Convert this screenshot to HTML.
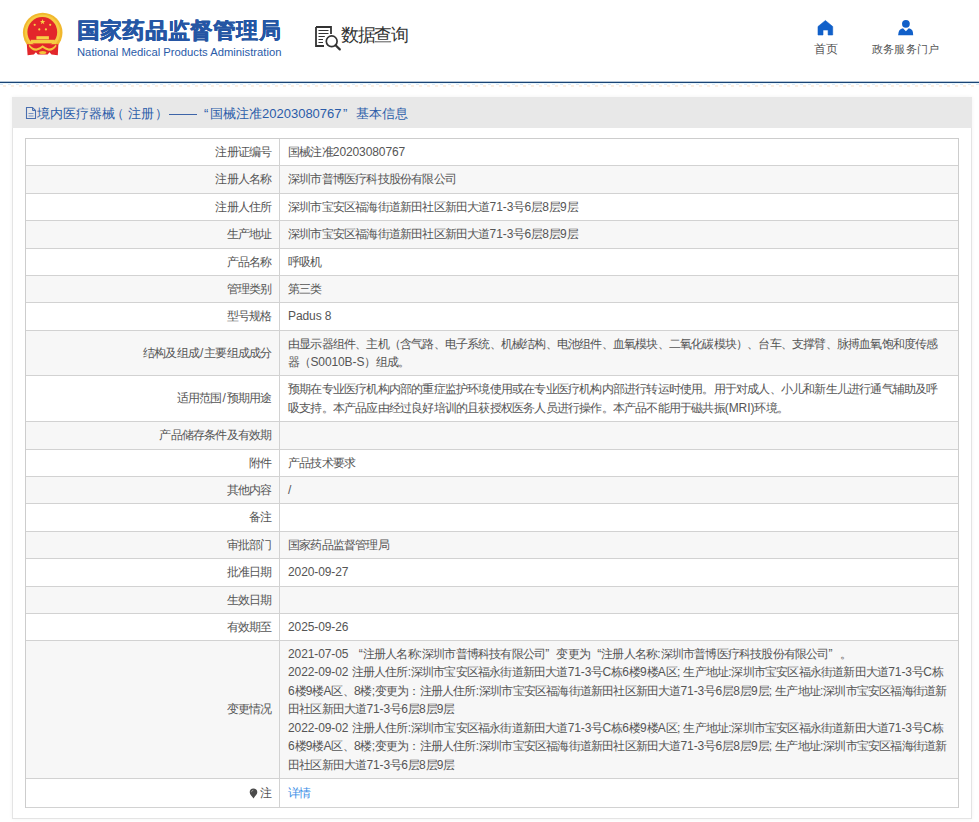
<!DOCTYPE html>
<html><head><meta charset="utf-8">
<style>
*{box-sizing:border-box;margin:0;padding:0}
html,body{width:979px;height:822px;overflow:hidden;background:#fff;font-family:"Liberation Sans",sans-serif;color:#555}
.a{position:absolute;white-space:nowrap}
#bline{position:absolute;left:0;top:82px;width:979px;height:1px;background:#1a4475;box-shadow:0 -0.5px 0 #6d8db0}
#stripe{position:absolute;left:0;top:83px;width:979px;height:1px;background:#e9f6fc}
#stripe2{position:absolute;left:0;top:84px;width:979px;height:1px;background:repeating-linear-gradient(90deg,#dde9f5 0 3px,#fff 3px 8px)}
#stripe3{position:absolute;left:0;top:85px;width:979px;height:2px;background:repeating-linear-gradient(90deg,#fff 0 3px,#fbeee2 3px 6px,#fff 6px 8px)}
#t1{left:77px;top:16px;font-size:22px;font-weight:bold;letter-spacing:0.7px;color:#2556a4;line-height:30px;text-shadow:0.5px 0 0 #2556a4,0 0.3px 0 #2556a4}
#t2{left:77px;top:45px;font-size:11.25px;color:#2a5ba8;line-height:14px}
#t3{left:341px;top:22px;font-size:18px;letter-spacing:-1.3px;color:#333;line-height:26px}
.nav{font-size:11px;color:#555;line-height:14px;letter-spacing:0.2px}
#panel{position:absolute;left:12px;top:97px;width:960px;height:722px;border-left:1px solid #e4e4e4;border-right:1px solid #e4e4e4;border-bottom:1px solid #e4e4e4;background:#fff;box-shadow:0 0 4px rgba(0,0,0,0.05)}
#ph{position:absolute;left:12px;top:97px;width:960px;height:31px;background:#e8e8e8}
.pt{font-size:13px;color:#2b5ca8;line-height:18px;top:105px}
#tbl{position:absolute;left:25px;top:138px;width:934px;border:1px solid #cdcdcd;border-bottom:none}
.r{position:relative;border-bottom:1px solid #d2d2d2;font-size:12px;letter-spacing:-0.8px;line-height:18.48px;color:#555;display:flex}
i{font-style:normal;letter-spacing:-0.1px}
.ql,.qr{font-weight:normal;display:inline-block;width:11.2px;letter-spacing:0}
.ql{text-align:right}.qr{text-align:left}
.lk{color:#3a8ee6}
.r:nth-child(even){background:#f7f7f7}
.l{width:254px;border-right:1px solid #d2d2d2;display:flex;align-items:center;justify-content:flex-end;padding-right:7.5px;white-space:nowrap}
.v{flex:1;display:flex;align-items:center;padding-left:8px;white-space:nowrap}
</style></head><body>
<svg class="a" style="left:0;top:0" width="80" height="70" viewBox="0 0 80 70">
  <circle cx="42.7" cy="32.6" r="19.8" fill="#f1b82e"/>
  <circle cx="42.5" cy="32.3" r="17.6" fill="#f6cc44"/>
  <circle cx="42.3" cy="32" r="14.9" fill="#e3262b"/>
  <path d="M26.8 44.3 L58.4 44.3 L57.8 55.3 L51.5 54.4 L49.5 52.2 L47.6 54.6 L37.8 54.6 L35.9 52.2 L33.9 54.4 L27.6 55.3Z" fill="#e2262b"/>
  <path d="M29.5 44.5 Q32.5 48.6 36.5 48.4 Q40 47.5 42.6 45.3 Q45.2 47.5 48.7 48.4 Q52.7 48.6 55.8 44.5 L56.6 46 Q53.5 51 48.7 50.7 Q45 50 42.6 47.8 Q40.2 50 36.5 50.7 Q31.7 51 28.7 46Z" fill="#f4c53c"/>
  <path d="M42.6 19 L43.3 21 L45.3 21 L43.7 22.2 L44.3 24.2 L42.6 23 L40.9 24.2 L41.5 22.2 L39.9 21 L41.9 21Z" fill="#f7d046"/>
  <circle cx="34.7" cy="24.8" r="1.1" fill="#f7d046"/>
  <circle cx="50.2" cy="24.8" r="1.1" fill="#f7d046"/>
  <circle cx="39.3" cy="29.4" r="1.1" fill="#f7d046"/>
  <circle cx="45.9" cy="29.4" r="1.1" fill="#f7d046"/>
  <rect x="36.4" y="36.2" width="12.5" height="3.2" fill="#f7d046"/>
  <rect x="30.8" y="39.8" width="24" height="3.6" fill="#f5cd42"/>
  <ellipse cx="42.7" cy="52.6" rx="3.6" ry="1.6" fill="#f3c33a"/>
</svg>
<div id="t1" class="a">国家药品监督管理局</div>
<div id="t2" class="a">National Medical Products Administration</div>
<svg class="a" style="left:314px;top:25px" width="28" height="26" viewBox="0 0 28 26">
  <path d="M2 2 H17 V9" fill="none" stroke="#333" stroke-width="1.8"/>
  <path d="M2 2 V21 H10" fill="none" stroke="#333" stroke-width="1.8"/>
  <path d="M4.5 5.5 H14.5 M4.5 8.5 H14.5 M4.5 11.5 H10.8 M4.5 14.5 H9 M4.5 17.5 H9" stroke="#333" stroke-width="1.2"/>
  <circle cx="17.7" cy="16.3" r="5.4" fill="none" stroke="#333" stroke-width="1.7"/>
  <path d="M21.6 20.2 L25.8 24.4" stroke="#333" stroke-width="2.2" stroke-linecap="round"/>
</svg>
<div id="t3" class="a">数据查询</div>
<svg class="a" style="left:816px;top:19px" width="19" height="18" viewBox="0 0 19 18">
  <path d="M2 7.5 L9.4 1.5 L16.7 7.5 L16.7 16 L12.1 16 L12.1 11 L7 11 L7 16 L2 16Z" fill="#1160c9" stroke="#1160c9" stroke-width="0.6" stroke-linejoin="round"/>
</svg>
<div class="a nav" style="left:814px;top:42px;font-size:12px;letter-spacing:-0.5px">首页</div>
<svg class="a" style="left:896px;top:18px" width="20" height="19" viewBox="0 0 20 19">
  <circle cx="9.9" cy="5.8" r="3.9" fill="#1160c9"/>
  <path d="M2.1 17.3 Q2.3 11 7 10.3 L9.9 13.2 L12.8 10.3 Q17.5 11 17.2 17.3Z" fill="#1160c9"/>
</svg>
<div class="a nav" style="left:872px;top:42px">政务服务门户</div>
<div id="bline"></div>
<div id="stripe"></div><div id="stripe2"></div><div id="stripe3"></div>
<div id="panel"></div>
<div id="ph"></div>
<svg class="a" style="left:25px;top:106px" width="12" height="14" viewBox="0 0 12 14">
  <path d="M1.5 1.5 H7.5 L10.5 4.5 V12.5 H1.5Z" fill="none" stroke="#4a6fb0" stroke-width="1.1"/>
  <path d="M7.5 1.5 V4.5 H10.5" fill="none" stroke="#4a6fb0" stroke-width="1"/>
  <path d="M3.5 7.5 H8.5 M3.5 10 H8.5" stroke="#6a88c0" stroke-width="0.9"/>
</svg>
<div class="a pt" style="left:36.5px">境内医疗器械</div>
<div class="a pt" style="left:110.5px">（</div>
<div class="a pt" style="left:128px">注册</div>
<div class="a pt" style="left:154.5px">）</div>
<div class="a" style="left:169px;top:114px;width:28px;height:1px;background:#3d64a8"></div>
<div class="a pt" style="left:204px">“</div>
<div class="a pt" style="left:210px">国械注准20203080767</div>
<div class="a pt" style="left:343px">”</div>
<div class="a pt" style="left:356px">基本信息</div>
<div id="tbl">
  <div class="r" style="height:27px"><div class="l">注册证编号</div><div class="v"><div><span class="ln">国械注准<i>20203080767</i></span></div></div></div>
  <div class="r" style="height:28px"><div class="l">注册人名称</div><div class="v"><div><span class="ln">深圳市普博医疗科技股份有限公司</span></div></div></div>
  <div class="r" style="height:27px"><div class="l">注册人住所</div><div class="v"><div><span class="ln">深圳市宝安区福海街道新田社区新田大道<i>71-3</i>号<i>6</i>层<i>8</i>层<i>9</i>层</span></div></div></div>
  <div class="r" style="height:28px"><div class="l">生产地址</div><div class="v"><div><span class="ln">深圳市宝安区福海街道新田社区新田大道<i>71-3</i>号<i>6</i>层<i>8</i>层<i>9</i>层</span></div></div></div>
  <div class="r" style="height:27px"><div class="l">产品名称</div><div class="v"><div><span class="ln">呼吸机</span></div></div></div>
  <div class="r" style="height:27px"><div class="l">管理类别</div><div class="v"><div><span class="ln">第三类</span></div></div></div>
  <div class="r" style="height:28px"><div class="l">型号规格</div><div class="v"><div><span class="ln"><i>Padus 8</i></span></div></div></div>
  <div class="r" style="height:45px"><div class="l">结构及组成<i style="padding:0 1px">/</i>主要组成成分</div><div class="v"><div><span class="ln">由显示器组件、主机（含气路、电子系统、机械结构、电池组件、血氧模块、二氧化碳模块）、台车、支撑臂、脉搏血氧饱和度传感</span><br><span class="ln">器（<i>S0010B-S</i>）组成。</span></div></div></div>
  <div class="r" style="height:46px"><div class="l">适用范围<i style="padding:0 1px">/</i>预期用途</div><div class="v"><div><span class="ln">预期在专业医疗机构内部的重症监护环境使用或在专业医疗机构内部进行转运时使用。用于对成人、小儿和新生儿进行通气辅助及呼</span><br><span class="ln">吸支持。本产品应由经过良好培训的且获授权医务人员进行操作。本产品不能用于磁共振<i>(MRI)</i>环境。</span></div></div></div>
  <div class="r" style="height:28px"><div class="l">产品储存条件及有效期</div><div class="v"><div></div></div></div>
  <div class="r" style="height:27px"><div class="l">附件</div><div class="v"><div><span class="ln">产品技术要求</span></div></div></div>
  <div class="r" style="height:27px"><div class="l">其他内容</div><div class="v"><div><span class="ln"><i>/</i></span></div></div></div>
  <div class="r" style="height:28px"><div class="l">备注</div><div class="v"><div></div></div></div>
  <div class="r" style="height:27px"><div class="l">审批部门</div><div class="v"><div><span class="ln">国家药品监督管理局</span></div></div></div>
  <div class="r" style="height:28px"><div class="l">批准日期</div><div class="v"><div><span class="ln"><i>2020-09-27</i></span></div></div></div>
  <div class="r" style="height:27px"><div class="l">生效日期</div><div class="v"><div></div></div></div>
  <div class="r" style="height:27px"><div class="l">有效期至</div><div class="v"><div><span class="ln"><i>2025-09-26</i></span></div></div></div>
  <div class="r" style="height:138px"><div class="l">变更情况</div><div class="v"><div><span class="ln"><i>2021-07-05 </i><b class="ql">“</b>注册人名称<i>:</i>深圳市普博科技有限公司<b class="qr">”</b>变更为<b class="ql">“</b>注册人名称<i>:</i>深圳市普博医疗科技股份有限公司<b class="qr">”</b>。</span><br><span class="ln"><i>2022-09-02 </i>注册人住所<i>:</i>深圳市宝安区福永街道新田大道<i>71-3</i>号<i>C</i>栋<i>6</i>楼<i>9</i>楼<i>A</i>区<i>; </i>生产地址<i>:</i>深圳市宝安区福永街道新田大道<i>71-3</i>号<i>C</i>栋</span><br><span class="ln"><i>6</i>楼<i>9</i>楼<i>A</i>区、<i>8</i>楼<i>;</i>变更为：注册人住所<i>:</i>深圳市宝安区福海街道新田社区新田大道<i>71-3</i>号<i>6</i>层<i>8</i>层<i>9</i>层<i>; </i>生产地址<i>:</i>深圳市宝安区福海街道新</span><br><span class="ln">田社区新田大道<i>71-3</i>号<i>6</i>层<i>8</i>层<i>9</i>层</span><br><span class="ln"><i>2022-09-02 </i>注册人住所<i>:</i>深圳市宝安区福永街道新田大道<i>71-3</i>号<i>C</i>栋<i>6</i>楼<i>9</i>楼<i>A</i>区<i>; </i>生产地址<i>:</i>深圳市宝安区福永街道新田大道<i>71-3</i>号<i>C</i>栋</span><br><span class="ln"><i>6</i>楼<i>9</i>楼<i>A</i>区、<i>8</i>楼<i>;</i>变更为：注册人住所<i>:</i>深圳市宝安区福海街道新田社区新田大道<i>71-3</i>号<i>6</i>层<i>8</i>层<i>9</i>层<i>; </i>生产地址<i>:</i>深圳市宝安区福海街道新</span><br><span class="ln">田社区新田大道<i>71-3</i>号<i>6</i>层<i>8</i>层<i>9</i>层</span></div></div></div>
  <div class="r" style="height:29px"><div class="l"><svg width="9" height="11" viewBox="0 0 9 11" style="margin-right:2px;vertical-align:-1px"><path d="M4.5 0.6 C2 0.6 0.7 2.3 0.7 4.3 C0.7 6.6 3.3 8.4 4.5 10.4 C5.7 8.4 8.3 6.6 8.3 4.3 C8.3 2.3 7 0.6 4.5 0.6Z" fill="#4a4a4a"/><path d="M2.4 4.2 Q2.6 2.4 4.4 2.1" fill="none" stroke="#9a9a9a" stroke-width="0.9"/></svg>注</div><div class="v"><div><span class="lk">详情</span></div></div></div>
</div>
</body></html>
